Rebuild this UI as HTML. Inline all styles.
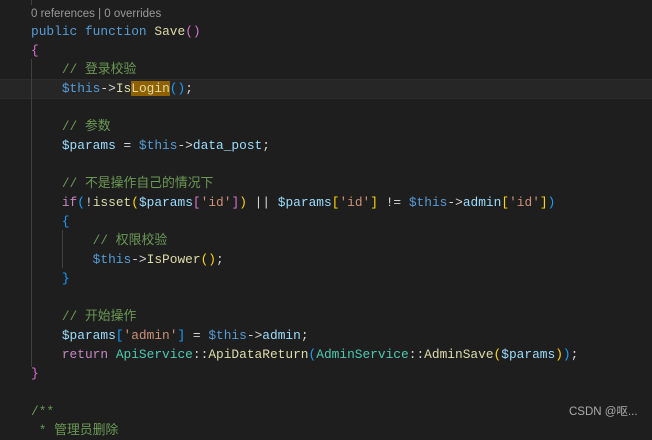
<!DOCTYPE html>
<html><head><meta charset="utf-8"><style>
html,body{margin:0;padding:0;}
body{width:652px;height:426px;background:#1e1e1e;overflow:hidden;position:relative;font-family:"Liberation Mono","Noto Sans CJK SC",monospace;font-size:12.85px;}
.l{position:absolute;left:31px;white-space:pre;height:19px;line-height:19px;color:#d4d4d4;}
.ref{font-family:"Liberation Sans",sans-serif;font-size:11.5px;color:#999;}
.k{color:#569cd6}.f{color:#dcdcaa}.v{color:#9cdcfe}.c{color:#6a9955}.s{color:#ce9178}.t{color:#4ec9b0}.r{color:#c586c0}
.p{color:#da70d6}.y{color:#ffd700}.b{color:#179fff}
.hl{background:#8f6100;}
.g{position:absolute;width:1px;background:#404040;}
</style></head><body>
<div style="position:absolute;left:0;top:79px;width:652px;height:18px;background:#262626;border-top:1px solid #2c2c2c;border-bottom:1px solid #2c2c2c;"></div>
<div class="g" style="left:31px;top:0;height:5px"></div>
<div class="g" style="left:31px;top:59px;height:308px"></div>
<div class="g" style="left:62px;top:230px;height:38px"></div>
<div class="l ref" style="top:5px">0 references | 0 overrides</div>
<div class="l" style="top:22px"><span class="k">public</span> <span class="k">function</span> <span class="f">Save</span><span class="p">()</span></div>
<div class="l" style="top:41px"><span class="p">{</span></div>
<div class="l" style="top:60px">    <span class="c">// 登录校验</span></div>
<div class="l" style="top:79px">    <span class="k">$this</span>-&gt;<span class="f">Is<span class="hl">Login</span></span><span class="b">()</span>;</div>
<div class="l" style="top:117px">    <span class="c">// 参数</span></div>
<div class="l" style="top:136px">    <span class="v">$params</span> = <span class="k">$this</span>-&gt;<span class="v">data_post</span>;</div>
<div class="l" style="top:174px">    <span class="c">// 不是操作自己的情况下</span></div>
<div class="l" style="top:193px">    <span class="r">if</span><span class="b">(</span>!<span class="f">isset</span><span class="y">(</span><span class="v">$params</span><span class="p">[</span><span class="s">'id'</span><span class="p">]</span><span class="y">)</span> || <span class="v">$params</span><span class="y">[</span><span class="s">'id'</span><span class="y">]</span> != <span class="k">$this</span>-&gt;<span class="v">admin</span><span class="y">[</span><span class="s">'id'</span><span class="y">]</span><span class="b">)</span></div>
<div class="l" style="top:212px">    <span class="b">{</span></div>
<div class="l" style="top:231px">        <span class="c">// 权限校验</span></div>
<div class="l" style="top:250px">        <span class="k">$this</span>-&gt;<span class="f">IsPower</span><span class="y">()</span>;</div>
<div class="l" style="top:269px">    <span class="b">}</span></div>
<div class="l" style="top:307px">    <span class="c">// 开始操作</span></div>
<div class="l" style="top:326px">    <span class="v">$params</span><span class="b">[</span><span class="s">'admin'</span><span class="b">]</span> = <span class="k">$this</span>-&gt;<span class="v">admin</span>;</div>
<div class="l" style="top:345px">    <span class="r">return</span> <span class="t">ApiService</span>::<span class="f">ApiDataReturn</span><span class="b">(</span><span class="t">AdminService</span>::<span class="f">AdminSave</span><span class="y">(</span><span class="v">$params</span><span class="y">)</span><span class="b">)</span>;</div>
<div class="l" style="top:364px"><span class="p">}</span></div>
<div class="l" style="top:402px"><span class="c">/**</span></div>
<div class="l" style="top:421px"><span class="c"> * 管理员删除</span></div>
<div style="position:absolute;left:569px;top:403px;font-family:'Liberation Sans','Noto Sans CJK SC',sans-serif;font-size:11.5px;color:#aaa;">CSDN @呕...</div>
</body></html>
